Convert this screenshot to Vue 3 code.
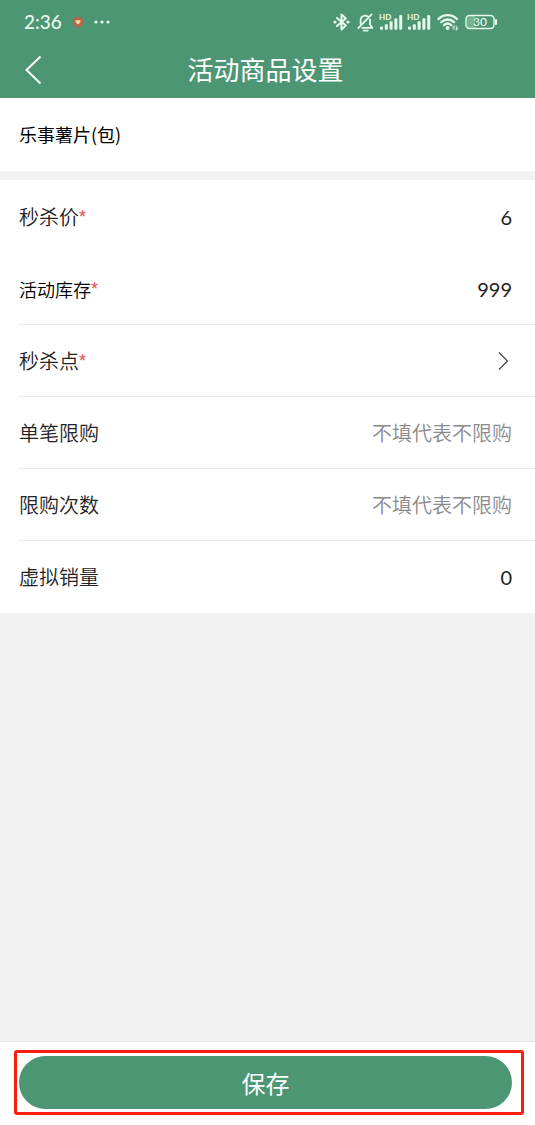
<script setup>
import { reactive } from 'vue'

const signals = ['sim1', 'sim2']

const fields = reactive([
  { id: 'price', label: '秒杀价', required: true, value: '6', divider: false },
  { id: 'stock', label: '活动库存', required: true, value: '999', divider: true, compact: true },
  { id: 'point', label: '秒杀点', required: true, picker: true, divider: true },
  { id: 'per-order', label: '单笔限购', value: '', placeholder: '不填代表不限购', divider: true },
  { id: 'times', label: '限购次数', value: '', placeholder: '不填代表不限购', divider: true },
  { id: 'sales', label: '虚拟销量', value: '0', divider: false },
])
</script>

<template>
  <div class="page">
    <header class="header">
      <div class="status">
        <div class="status-left">
          <span class="clock">2:36</span>
          <svg class="dot" width="12" height="12" viewBox="0 0 12 12" aria-hidden="true">
            <circle cx="6" cy="6" r="5.5" fill="#ad6a4c" />
            <path d="M6 8.6 3.6 6.2V4.4L5 3.9l1 .7 1-.7 1.4.5v1.8z" fill="#f6d9b4" />
          </svg>
          <svg width="17" height="4" viewBox="0 0 17 4" fill="#e9f8ec" aria-hidden="true">
            <circle cx="2" cy="2" r="1.6" />
            <circle cx="8" cy="2" r="1.6" />
            <circle cx="14" cy="2" r="1.6" />
          </svg>
        </div>
        <div class="status-right">
          <svg class="bluetooth" width="17" height="18" viewBox="0 0 17 18" aria-hidden="true">
            <path d="M4 5 12.8 12.6 8.5 16.6V1.4l4.3 4L4 13" fill="none" stroke="#e9f8ec" stroke-width="2" stroke-linejoin="round" stroke-linecap="round" />
            <circle cx="2" cy="9" r="1.6" fill="#e9f8ec" />
            <circle cx="15" cy="9" r="1.6" fill="#e9f8ec" />
          </svg>
          <svg class="bell" width="17" height="19" viewBox="0 0 17 19" fill="none" stroke="#e9f8ec" stroke-width="1.8" stroke-linecap="round" stroke-linejoin="round" aria-hidden="true">
            <path d="M3.6 11V7.3C3.6 4.6 5.6 2.6 8.2 2.6c1 0 1.9.3 2.6.8" />
            <path d="M13 6.4v5.4l2.4 3H5.4" />
            <path d="M1.3 15.2 14.6 1.4" />
            <path d="M6.6 17.6h4.2" />
          </svg>
          <svg v-for="sim in signals" :key="sim" class="signal" width="24" height="18" viewBox="0 0 24 18" fill="#e9f8ec" aria-hidden="true">
            <text x="0" y="7" class="hd">HD</text>
            <rect x="1" y="13.5" width="3" height="3.2" rx="1" />
            <rect x="5.8" y="11.3" width="3" height="5.4" rx="1" />
            <rect x="10.6" y="8.3" width="3" height="8.4" rx="1" />
            <rect x="15.4" y="5.2" width="3" height="11.5" rx="1" />
            <rect x="20.2" y="2" width="3" height="14.7" rx="1" />
          </svg>
          <svg class="wifi" width="22" height="18" viewBox="0 0 22 18" aria-hidden="true">
            <g fill="none" stroke="#e9f8ec" stroke-width="2.4" stroke-linecap="round">
              <path d="M1.6 5.9C6.8.9 14.6.9 19.8 5.9" />
              <path d="M4.4 9.1c3.7-3.5 9-3.5 12.6 0" />
              <path d="M7.2 12.2c2.1-1.9 4.9-1.9 7 0" />
            </g>
            <circle cx="10.6" cy="15" r="1.9" fill="#e9f8ec" />
            <path d="M17 17v-4l-1.6 1.8M19.4 12.8v4l1.6-1.8" stroke="#c3e0cd" stroke-width="1.2" fill="none" />
          </svg>
          <svg class="battery" width="33" height="16" viewBox="0 0 33 16" aria-hidden="true">
            <path d="M5 2h5v12H5a3 3 0 0 1-3-3V5a3 3 0 0 1 3-3z" fill="#78b391" />
            <rect x="1" y="1.5" width="28" height="13" rx="3.5" fill="none" stroke="#e9f8ec" stroke-width="1.4" />
            <path d="M31 6v4" stroke="#e9f8ec" stroke-width="2" stroke-linecap="round" />
            <text x="15" y="12" text-anchor="middle" class="charge">30</text>
          </svg>
        </div>
      </div>
      <div class="nav">
        <button class="back" type="button" aria-label="返回">
          <svg width="18" height="30" viewBox="0 0 18 30" aria-hidden="true">
            <path d="M16.5 1.5 2.5 15l14 13.5" fill="none" stroke="#fff" stroke-width="2" />
          </svg>
        </button>
        <h1 class="title">活动商品设置</h1>
      </div>
    </header>

    <main class="content">
      <h2 class="product">乐事薯片(包)</h2>
      <form class="list" @submit.prevent>
        <div v-for="f in fields" :key="f.id" class="row" :class="{ divider: f.divider }">
          <label class="label" :class="{ compact: f.compact }" :for="f.id">{{ f.label }}<span v-if="f.required" class="star">*</span></label>
          <button v-if="f.picker" :id="f.id" class="picker" type="button" aria-label="选择秒杀点">
            <svg width="14" height="20" viewBox="0 0 14 20" aria-hidden="true">
              <path d="M1 1.5 9.5 10 1 18.5" fill="none" stroke="#444" stroke-width="1.2" />
            </svg>
          </button>
          <input v-else :id="f.id" v-model="f.value" class="value" type="text" inputmode="numeric" :placeholder="f.placeholder" />
        </div>
      </form>
    </main>

    <footer class="footer">
      <div class="frame">
        <button class="save" type="button">保存</button>
      </div>
    </footer>
  </div>
</template>

<style>
body {
  margin: 0;
}
</style>

<style scoped>
.page {
  display: flex;
  flex-direction: column;
  min-height: 100vh;
  background: #f2f2f2;
  color: #222;
  font-family: Lato, "Noto Sans CJK SC", sans-serif;
  font-size: 20px;
}
.page * {
  box-sizing: border-box;
}
button,
input {
  padding: 0;
  border: 0;
  background: none;
  color: inherit;
  font: inherit;
}
.header {
  height: 98px;
  background: #4d9674;
  color: #fff;
}
.status {
  display: flex;
  align-items: center;
  justify-content: space-between;
  height: 44px;
  padding: 0 37px 0 24px;
  color: #e9f8ec;
}
.status-left,
.status-right {
  display: flex;
  align-items: center;
}
.status-left {
  gap: 10px;
}
.clock {
  font-size: 19px;
  font-weight: 500;
  line-height: 24px;
}
.bell {
  margin-left: 7px;
}
.signal {
  margin-left: 4px;
}
.bell + .signal {
  margin-left: 5px;
}
.wifi {
  margin-left: 6px;
}
.battery {
  margin-left: 6px;
}
.hd {
  font: 700 8px Lato, sans-serif;
}
.charge {
  font: 500 12px Lato, sans-serif;
  fill: #e9f8ec;
}
.nav {
  display: grid;
  grid-template-columns: 60px 1fr 64px;
  align-items: center;
  height: 52px;
}
.back {
  display: flex;
  align-items: center;
  height: 52px;
  padding-left: 24px;
}
.title {
  margin: 0;
  font-size: 26px;
  font-weight: 400;
  line-height: 36px;
  text-align: center;
}
.content {
  flex: 1;
}
.product {
  margin: 0 0 9px;
  padding: 0 19px;
  background: #fff;
  color: #000;
  font-family: "Noto Sans CJK SC", sans-serif;
  font-size: 18px;
  font-weight: 400;
  line-height: 73px;
}
.list {
  padding-top: 1px;
  background: #fff;
}
.row {
  display: flex;
  align-items: center;
  height: 72px;
  margin-left: 18px;
  padding: 0 23px 0 1px;
}
.divider {
  border-bottom: 1px solid #e9e9e9;
}
.label {
  flex: none;
  font-family: "Noto Sans CJK SC", sans-serif;
  font-weight: 350;
  line-height: 30px;
}
.compact {
  color: #000;
  font-size: 18px;
}
.star {
  color: #e8484a;
  font-family: "Liberation Sans", sans-serif;
  font-size: 18px;
  line-height: 1;
  vertical-align: 2px;
}
.value {
  flex: 1;
  min-width: 0;
  height: 30px;
  outline: none;
  text-align: right;
}
.value::placeholder {
  color: #8a8a8a;
  font-weight: 350;
  opacity: 1;
}
.picker {
  display: flex;
  flex: 1;
  align-items: center;
  justify-content: flex-end;
  height: 30px;
}
.footer {
  padding: 8px 11px 10px 14px;
  border-top: 1px solid #e4e4e4;
  background: #fff;
}
.frame {
  padding: 3px 9px 3px 2px;
  border: 3px solid #fc1d0e;
  border-radius: 3px;
}
.save {
  display: block;
  width: 100%;
  height: 53px;
  border-radius: 27px;
  background: #4d9674;
  color: #fff;
  font-size: 24px;
}
</style>
